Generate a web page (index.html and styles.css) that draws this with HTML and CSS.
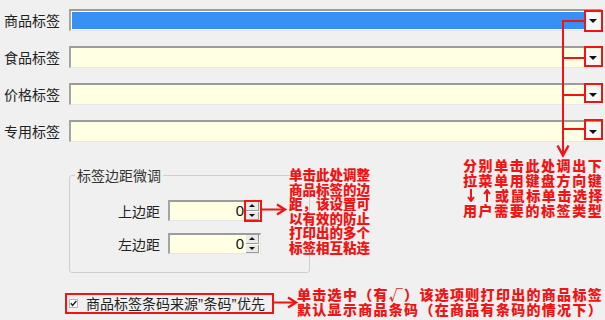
FILE: index.html
```html
<!DOCTYPE html>
<html lang="zh">
<head>
<meta charset="utf-8">
<link rel="stylesheet" href="styles.css">
</head>
<body>
<div class="screen">
  <div class="fields">
    <div class="row">
      <span class="lbl">商品标签</span>
      <div class="combo"><div class="val selected"></div><div class="drop"><i class="tri"></i></div></div>
    </div>
    <div class="row">
      <span class="lbl">食品标签</span>
      <div class="combo"><div class="val"></div><div class="drop"><i class="tri"></i></div></div>
    </div>
    <div class="row">
      <span class="lbl">价格标签</span>
      <div class="combo"><div class="val"></div><div class="drop"><i class="tri"></i></div></div>
    </div>
    <div class="row">
      <span class="lbl">专用标签</span>
      <div class="combo"><div class="val"></div><div class="drop"><i class="tri"></i></div></div>
    </div>
  </div>

  <fieldset class="group">
    <legend class="legend">标签边距微调</legend>
    <div class="spin-grid">
      <span class="slbl">上边距</span>
      <div class="spin"><span class="num">0</span><div class="arrows"><span class="sb"><i class="up"></i></span><span class="sb"><i class="dn"></i></span></div></div>
      <span class="slbl">左边距</span>
      <div class="spin"><span class="num">0</span><div class="arrows"><span class="sb"><i class="up"></i></span><span class="sb"><i class="dn"></i></span></div></div>
    </div>
  </fieldset>

  <div class="check-row">
    <span class="cbox"><svg width="9" height="9" viewBox="0 0 9 9"><path d="M1.8 4.3 L3.6 6.4 L7.3 2" fill="none" stroke="#222" stroke-width="1.5"/></svg></span>
    <span class="ctext">商品标签条码来源<span class="q">”</span>条码<span class="q">”</span>优先</span>
  </div>

  <svg class="marks" width="605" height="320" viewBox="0 0 605 320">
    <g fill="none" stroke="#f01414" stroke-width="2">
      <rect x="585" y="11" width="17" height="20"/>
      <rect x="585" y="47" width="17" height="19"/>
      <rect x="585" y="84" width="17" height="18"/>
      <rect x="585" y="120" width="17" height="19"/>
      <path d="M563 21 H585 M563 58 H585 M563 95 H585 M563 129 H585"/>
      <path d="M563 20 V155"/>
      <path d="M557.5 145.5 L563 155.5 L568.5 145.5" stroke-width="2.4"/>
      <rect x="245" y="201" width="16" height="20"/>
      <path d="M261 209.5 H284"/>
      <path d="M277 204.5 L285 209.5 L277 214.5" stroke-width="2.4"/>
      <rect x="66" y="294" width="207" height="19"/>
      <path d="M273 302.5 H295"/>
      <path d="M288 297.5 L296 302.5 L288 307.5" stroke-width="2.4"/>
    </g>
  </svg>

  <div class="note note1">分别单击此处调出下<br>拉菜单用键盘方向键<br><span class="arr"><svg width="16" height="13" viewBox="0 0 16 13"><path d="M8 0 V12 M5 8 L8 12 L11 8" fill="none" stroke="#f01414" stroke-width="2"/></svg></span><span class="arr"><svg width="16" height="13" viewBox="0 0 16 13"><path d="M8 13 V1 M5 5 L8 1 L11 5" fill="none" stroke="#f01414" stroke-width="2"/></svg></span>或鼠标单击选择<br>用户需要的标签类型</div>
  <div class="note note2">单击此处调整<br>商品标签的边<br>距，该设置可<br>以有效的防止<br>打印出的多个<br>标签相互粘连</div>
  <div class="note note3">单击选中（有√）该选项则打印出的商品标签<br>默认显示商品条码（在商品有条码的情况下）</div>
</div>
</body>
</html>
```

FILE: styles.css
```css
html, body {
  margin: 0;
  padding: 0;
  background: #f0f0f0;
}

.screen {
  position: relative;
  width: 605px;
  height: 320px;
  overflow: hidden;
  box-sizing: border-box;
  padding: 9px 0 0 4px;
  font-family: "Noto Sans CJK SC", "Noto Sans", sans-serif;
  font-size: 14px;
  color: #222;
}

.fields {
  display: flex;
  flex-direction: column;
  gap: 15px;
}

.row {
  display: flex;
  align-items: center;
  height: 22px;
}

.lbl {
  width: 65px;
  line-height: 16px;
}

.combo {
  width: 533px;
  height: 22px;
  box-sizing: border-box;
  display: flex;
  align-items: stretch;
  background: #ffffe3;
  border-top: 2px solid #9c9c9c;
  border-left: 2px solid #a4a4a4;
  border-bottom: 1px solid #e6e6e6;
  border-right: 1px solid #e6e6e6;
  padding: 1px;
}

.val {
  flex: 1;
}

.val.selected {
  background: #3790f4;
}

.drop {
  width: 15px;
  background: #f7f7f7;
  display: flex;
  align-items: center;
  justify-content: center;
}

.tri {
  width: 0;
  height: 0;
  border-left: 4px solid transparent;
  border-right: 4px solid transparent;
  border-top: 4px solid #111;
}

.group {
  margin: 25px 0 0 65px;
  width: 241px;
  height: 106px;
  box-sizing: border-box;
  padding: 0;
  border: 1px solid #cfcfcf;
  border-radius: 3px;
  min-width: 0;
}

.legend {
  margin-left: 5px;
  padding: 0 2px;
  line-height: 16px;
  color: #333;
}

.spin-grid {
  display: grid;
  grid-template-columns: 42px 93px;
  column-gap: 8px;
  row-gap: 12px;
  margin: 17px 0 0 48px;
  align-items: center;
}

.slbl {
  line-height: 16px;
}

.spin {
  height: 21px;
  box-sizing: border-box;
  display: flex;
  align-items: center;
  background: #ffffe3;
  border-top: 2px solid #9c9c9c;
  border-left: 2px solid #a4a4a4;
  border-bottom: 1px solid #e6e6e6;
  border-right: 1px solid #e6e6e6;
}

.num {
  flex: 1;
  text-align: right;
  font-family: "Liberation Sans", sans-serif;
  font-size: 15px;
  line-height: 16px;
  padding-right: 2px;
  color: #111;
}

.arrows {
  width: 13px;
  height: 18px;
  display: flex;
  flex-direction: column;
  margin-right: 1px;
  gap: 1px;
}

.sb {
  flex: 1;
  background: #eaeaea;
  border: 1px solid #9a9a9a;
  border-width: 0 1px 1px 0;
  display: flex;
  align-items: center;
  justify-content: center;
}

.up, .dn {
  width: 0;
  height: 0;
  border-left: 3px solid transparent;
  border-right: 3px solid transparent;
}

.up {
  border-bottom: 3px solid #111;
}

.dn {
  border-top: 3px solid #111;
}

.check-row {
  display: flex;
  align-items: center;
  height: 20px;
  margin: 20px 0 0 65px;
}

.cbox {
  width: 9px;
  height: 9px;
  box-sizing: border-box;
  display: flex;
  margin: 0 8px 0 0;
  border: 1px solid #b8b8b8;
  background: #fff;
}

.cbox svg {
  margin: -1px;
}

.ctext {
  line-height: 16px;
  color: #222;
}

.q {
  font-family: "Liberation Sans", sans-serif;
  font-size: 15px;
  letter-spacing: 0.5px;
}

.marks {
  position: absolute;
  left: 0;
  top: 0;
  pointer-events: none;
}

.note {
  position: absolute;
  color: #f01414;
  font-weight: 900;
  white-space: nowrap;
}

.note1 {
  left: 463px;
  top: 158px;
  font-size: 14px;
  line-height: 15px;
  letter-spacing: 1.6px;
}

.arr {
  display: inline-block;
  width: 16px;
  height: 13px;
  vertical-align: -1px;
}

.arr svg {
  display: block;
}

.note2 {
  left: 289px;
  top: 167px;
  font-size: 13.5px;
  line-height: 14.5px;
}

.note3 {
  left: 297px;
  top: 287px;
  font-size: 14px;
  line-height: 14.5px;
  letter-spacing: 1.3px;
}
```
